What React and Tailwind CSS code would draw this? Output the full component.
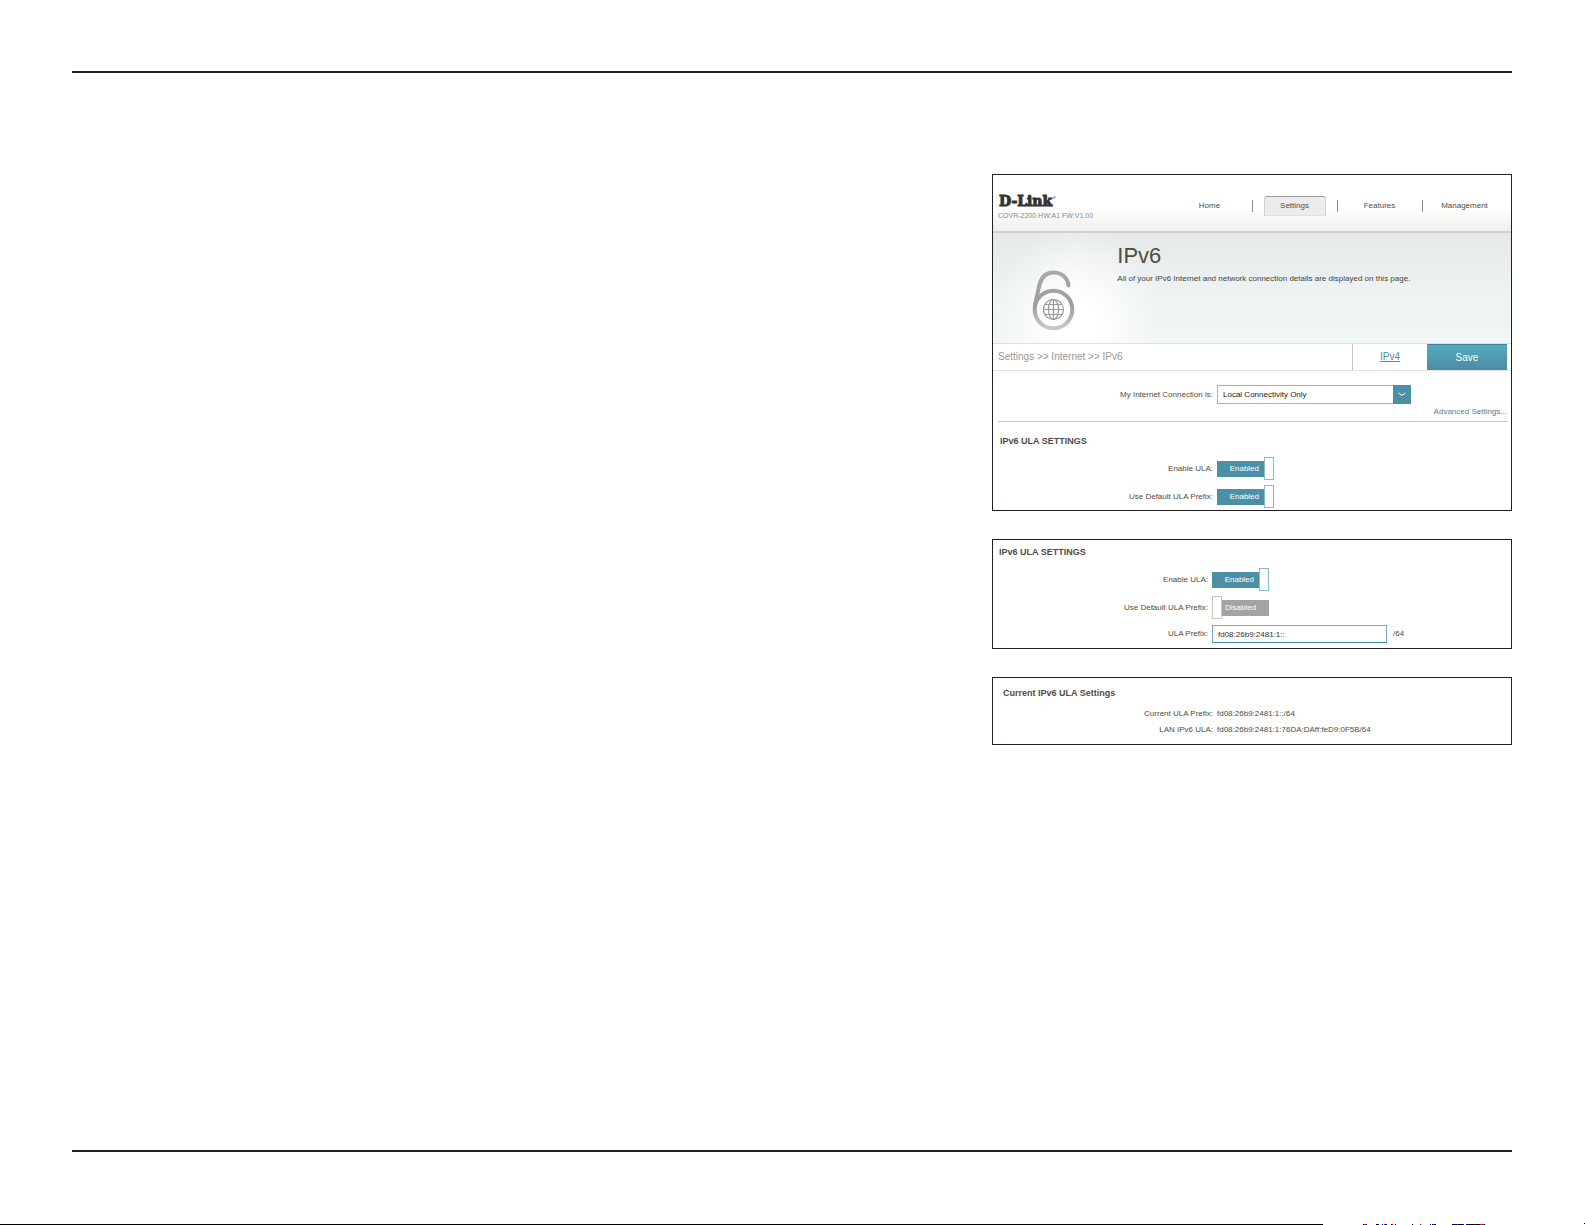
import { useState } from "react";
import clsx from "clsx";

const NAV = ["Home", "Settings", "Features", "Management"];

// x, width and colour of the printed marks in the footer strip
const FOOTER_MARKS = [
    [0, 1323, "#000"],
    [1363, 1, "#000"], [1364, 1, "#f00"], [1365, 1, "#080"], [1366, 1, "#00f"],
    [1376, 2, "#000"], [1378, 1, "#00f"],
    [1381, 1, "#ff8"], [1382, 1, "#00f"], [1384, 1, "#f00"], [1385, 1, "#000"], [1386, 1, "#00f"],
    [1391, 1, "#000"], [1392, 1, "#f00"], [1393, 1, "#8ff"], [1395, 1, "#000"],
    [1412, 1, "#000"], [1413, 1, "#8ff"],
    [1420, 1, "#f00"], [1421, 1, "#8ff"],
    [1429, 1, "#ff8"], [1430, 1, "#00f"], [1432, 1, "#000"], [1433, 1, "#080"], [1434, 2, "#008"],
    [1452, 2, "#000"], [1454, 1, "#00f"], [1455, 2, "#000"], [1457, 1, "#080"], [1458, 4, "#000"], [1462, 2, "#00f"],
    [1465, 1, "#ff8"], [1466, 1, "#00f"], [1467, 7, "#000"], [1474, 1, "#800"], [1475, 5, "#000"],
    [1480, 1, "#f00"], [1481, 1, "#080"], [1482, 2, "#f00"], [1484, 1, "#00f"], [1485, 1, "#8ff"]
];

export default function App() {
    return (
        <div className="flex min-h-screen flex-col bg-white font-['Liberation_Sans',Arial,sans-serif] text-[8px] leading-[10px] text-[#4f4c43]">
            <main className="mt-[71px] mr-[73px] mb-[71px] ml-[72px] grow border-y-2 border-[#231f20] pt-[101px]">
                <div className="ml-auto flex w-full max-w-[520px] flex-col gap-7">
                    <ConnectionPanel />
                    <PrefixPanel />
                    <CurrentPanel />
                </div>
            </main>
            <FooterStrip />
        </div>
    );
}

/* ================= PANELS ================= */
function ConnectionPanel() {
    return (
        <section className="border border-[#231f20] pb-[2px]">
            <header className="flex h-[58px] items-start justify-between border-b-2 border-[#cdd1d1] bg-linear-to-b from-white from-60% to-[#efeeed] pt-[16px] pr-[4px] pl-[5px]">
                <div>
                    <Logo />
                    <p className="text-[7px] leading-[10px] text-[#8b8984]">COVR-2200 HW:A1 FW:V1.00</p>
                </div>
                <nav className="mt-[5px] flex w-[340px] items-center">
                    {NAV.map((item, i) => (
                        <div key={item} className="relative flex flex-1 justify-center">
                            {i > 0 && <span className="absolute top-1 left-0 h-3 w-px bg-[#85878a]" />}
                            <a
                                href="#"
                                className={clsx(
                                    "flex h-5 w-[62px] items-center justify-center rounded-t-[3px] border border-transparent",
                                    item === "Settings" && "border-x-[#d0d0d0] border-t-[#999] border-b-[#e0e0e0] bg-[#ececec]"
                                )}
                            >
                                {item}
                            </a>
                        </div>
                    ))}
                </nav>
            </header>

            <div className="flex h-[110px] bg-[radial-gradient(ellipse_84px_110px_at_16%_90%,white_25%,transparent),linear-gradient(to_bottom,#e5e9ea,#eef3f4_60%,#f0f5f5)]">
                <div className="w-[24%] pt-[36px] pl-[39px]">
                    <LockIcon />
                </div>
                <div className="pt-[10px]">
                    <h1 className="text-[22px] leading-[26px] text-[#504c3b]">IPv6</h1>
                    <p className="mt-[5px] text-[#45433c]">All of your IPv6 Internet and network connection details are displayed on this page.</p>
                </div>
            </div>

            <div className="flex h-[28px] border-y border-[#dfe2e3] pr-[4px] text-[10px] leading-[12px]">
                <p className="flex grow items-center pl-[5px] text-[#9a9894]">Settings &gt;&gt; Internet &gt;&gt; IPv6</p>
                <a href="#" className="flex w-[75px] items-center justify-center border-l border-[#c4c8c9] text-[#4b8fa6] underline">IPv4</a>
                <button type="button" className="w-[80px] border-t border-[#43839a] bg-linear-to-b from-[#55aabd] to-[#4b8ca4] text-white">Save</button>
            </div>

            <div className="mr-1 ml-[5px] flex flex-col border-b border-[#c4c4c4] pt-[14px] pb-[4px]">
                <div className="grid grid-cols-[219fr_290fr] items-center">
                    <label htmlFor="connection" className="pr-1 text-right">My Internet Connection is:</label>
                    <div className="relative w-[194px]">
                        <select id="connection" className="block h-[19px] w-full appearance-none border border-[#8bbccb] bg-white px-[5px] text-[#222]">
                            <option>Local Connectivity Only</option>
                        </select>
                        <span className="pointer-events-none absolute inset-y-0 right-0 flex w-[18px] items-center justify-center bg-[#4b90a7]">
                            <svg width="8" height="5" viewBox="0 0 8 5" fill="none" stroke="white">
                                <path d="M.5 1 4 3.500 7.500 1" />
                            </svg>
                        </span>
                    </div>
                </div>
                <a href="#" className="mt-[3px] self-end text-[#4b8298]">Advanced Settings...</a>
            </div>

            <h2 className="mt-[14px] pl-[7px] text-[9px] leading-[10px] font-bold">IPv6 ULA SETTINGS</h2>
            <div className="mt-[11px] grid grid-cols-[224fr_294fr] items-center gap-y-[5px]">
                <ToggleRow id="ula" label="Enable ULA:" initial />
                <ToggleRow id="default-prefix" label="Use Default ULA Prefix:" initial />
            </div>
        </section>
    );
}

function PrefixPanel() {
    return (
        <section className="border border-[#231f20] pb-[5px]">
            <h2 className="mt-[7px] pl-[6px] text-[9px] leading-[10px] font-bold">IPv6 ULA SETTINGS</h2>
            <div className="mt-[11px] grid grid-cols-[219fr_299fr] items-center gap-y-[5px]">
                <ToggleRow id="ula-2" label="Enable ULA:" initial />
                <ToggleRow id="default-prefix-2" label="Use Default ULA Prefix:" />
            </div>
            <div className="mt-[6px] grid grid-cols-[219fr_299fr] items-center">
                <label htmlFor="prefix" className="pr-1 text-right">ULA Prefix:</label>
                <div className="flex items-center gap-[6px]">
                    <input
                        id="prefix"
                        type="text"
                        defaultValue="fd08:26b9:2481:1::"
                        className="h-[18px] w-[175px] border border-[#76abbc] border-b-[#3d88a0] px-[5px] text-[#333]"
                    />
                    <span>/64</span>
                </div>
            </div>
        </section>
    );
}

function CurrentPanel() {
    return (
        <section className="border border-[#231f20] pt-[10px] pb-[9px]">
            <h2 className="pl-[10px] text-[9px] leading-[10px] font-bold">Current IPv6 ULA Settings</h2>
            <dl className="mt-[11px] grid grid-cols-[224fr_294fr] gap-y-[6px]">
                <dt className="pr-1 text-right">Current ULA Prefix:</dt>
                <dd>fd08:26b9:2481:1::/64</dd>
                <dt className="pr-1 text-right">LAN IPv6 ULA:</dt>
                <dd>fd08:26b9:2481:1:76DA:DAff:feD9:0F5B/64</dd>
            </dl>
        </section>
    );
}

/* ================= SMALL COMPONENTS ================= */
function ToggleRow({ id, label, initial = false }) {
    const [on, setOn] = useState(initial);

    return (
        <>
            <label htmlFor={id} className="pr-1 text-right">{label}</label>
            <label className={clsx("relative flex h-[23px] w-[57px] cursor-pointer items-center", !on && "flex-row-reverse")}>
                <input id={id} type="checkbox" className="sr-only" checked={on} onChange={e => setOn(e.target.checked)} />
                <span className={clsx("flex h-4 grow items-center text-white", on ? "justify-end bg-[#4b90a7] pr-[5px]" : "bg-[#a3a3a3] pl-[3px]")}>
                    {on ? "Enabled" : "Disabled"}
                </span>
                <span className={clsx("h-full w-[10px] border bg-white", on ? "border-[#8bbccb]" : "border-[#c8c8c8]")} />
            </label>
        </>
    );
}

function Logo() {
    return (
        <div className="flex items-start pl-px font-['DejaVu_Serif',serif] text-[14px] leading-[20px] font-bold text-[#333] [-webkit-text-stroke:1px_#333]">
            D-Link
            <span className="text-[4px] leading-[14px] font-normal [-webkit-text-stroke:0]">®</span>
        </div>
    );
}

function LockIcon() {
    return (
        <svg width="44" height="63" viewBox="0 0 44 63" fill="none">
            <defs>
                <linearGradient id="metal" gradientUnits="userSpaceOnUse" x1="0" y1="0" x2="0" y2="62">
                    <stop offset="0" stopColor="#aaa" />
                    <stop offset="0.6" stopColor="#9c9c9c" />
                    <stop offset="1" stopColor="#cfcfcf" />
                </linearGradient>
            </defs>
            <g stroke="url(#metal)" strokeWidth="4">
                <circle cx="21.500" cy="40.500" r="18.800" />
                <path d="M2.800 37 7.500 15.500C9.500 8 14.500 3.500 21.500 3.500 29.500 3.500 35.500 8.500 36.500 16.500" strokeLinecap="round" />
            </g>
            <g stroke="#999" strokeWidth="1.200">
                <circle cx="21.500" cy="40.500" r="10" />
                <ellipse cx="21.500" cy="40.500" rx="5" ry="10" />
                <path d="M21.500 30.500v20M11.500 40.500h20M13 35.500h17M13 45.500h17" />
            </g>
        </svg>
    );
}

function FooterStrip() {
    return (
        <svg className="block h-[2px] w-full" viewBox="0 0 1585 2" preserveAspectRatio="none" shapeRendering="crispEdges" aria-hidden="true">
            {FOOTER_MARKS.map(([x, w, color]) => (
                <rect key={x} x={x} y="1" width={w} height="1" fill={color} />
            ))}
            <rect x="1584" y="0" width="1" height="1" fill="#000" />
        </svg>
    );
}
